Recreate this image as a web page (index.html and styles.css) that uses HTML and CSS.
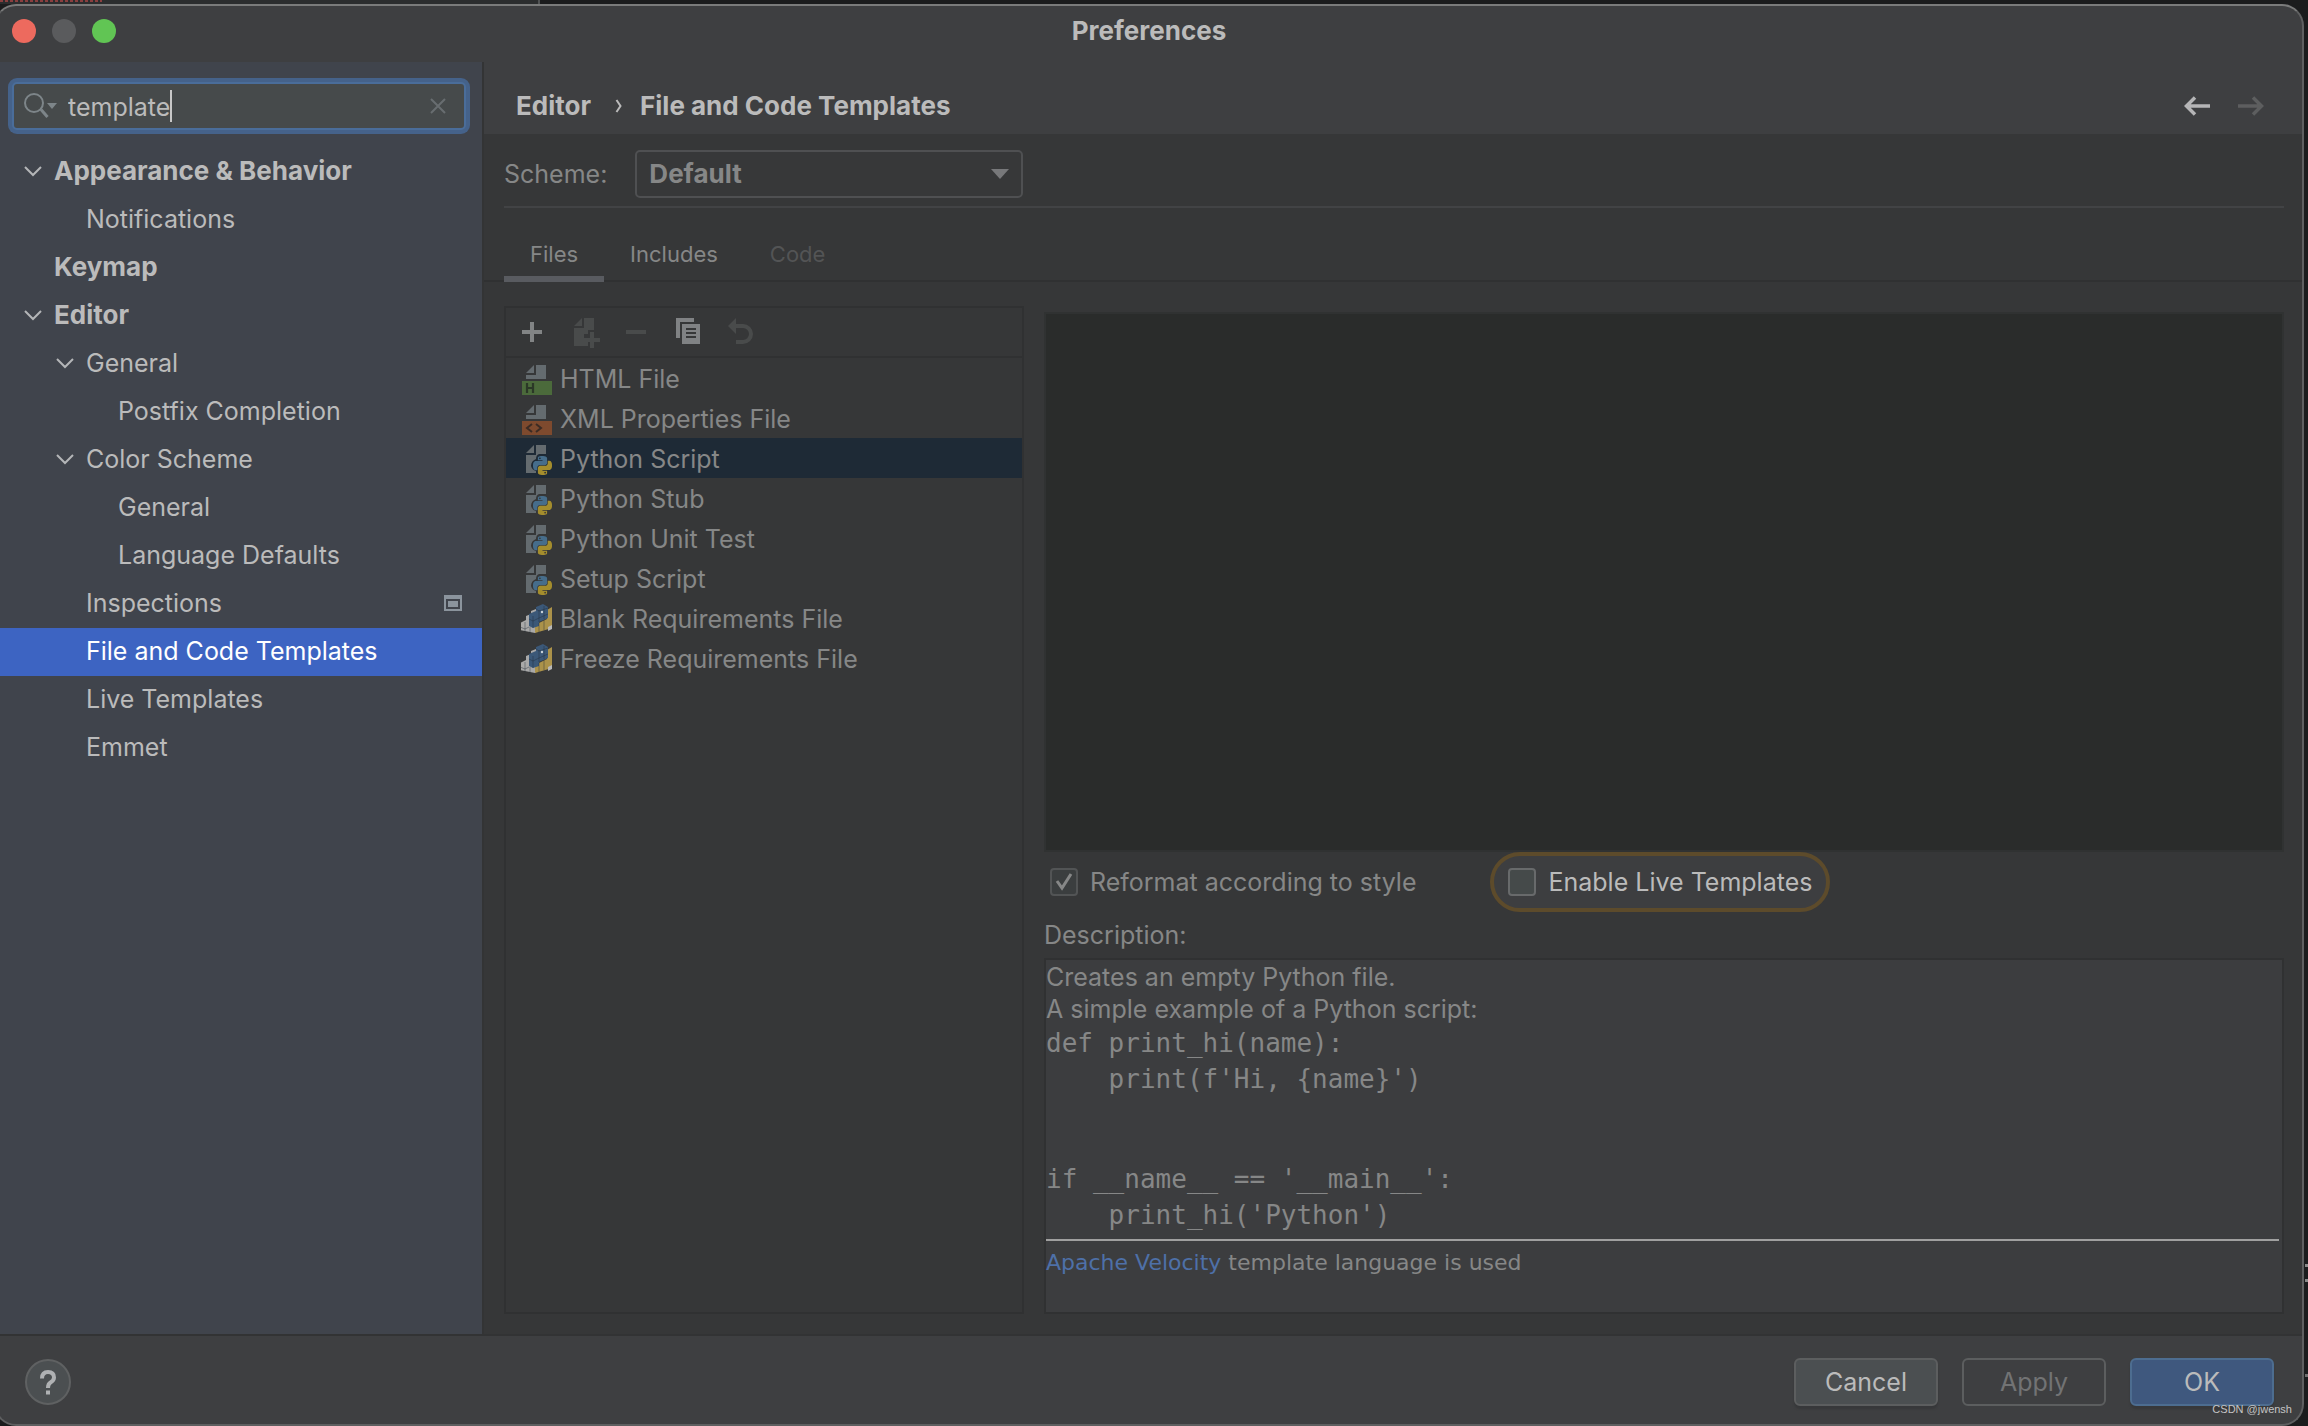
FILE: index.html
```html
<!DOCTYPE html>
<html lang="en">
<head>
<meta charset="utf-8">
<title>Preferences</title>
<link rel="stylesheet" href="styles.css">
</head>
<body>
<svg class="sprite" aria-hidden="true">
  <symbol id="chevron" viewBox="0 0 20 20"><path d="M2 6l8 8 8-8" fill="none" stroke="#b4b6b8" stroke-width="2"/></symbol>
  <symbol id="snake" viewBox="0 0 24 24">
    <path id="snake-half" fill="#466d8b" d="M14.25.18l.9.2.73.26.59.3.45.32.34.34.25.34.16.33.1.3.04.26.02.2-.01.13V8.500l-.05.63-.13.55-.21.46-.26.38-.3.31-.33.25-.35.19-.35.14-.33.1-.3.07-.26.04-.21.02H8.770l-.69.05-.59.14-.5.22-.41.27-.33.32-.27.35-.2.36-.15.37-.1.35-.07.32-.04.27-.02.21v3.060H3.170l-.21-.03-.28-.07-.32-.12-.35-.18-.36-.26-.36-.36-.35-.46-.32-.59-.28-.73-.21-.88-.14-1.050-.05-1.230.06-1.220.16-1.040.24-.87.32-.71.36-.57.4-.44.42-.33.42-.24.4-.16.36-.1.32-.05.24-.01h.16l.06.01h8.160v-.83H6.180l-.01-2.750-.02-.37.05-.34.11-.31.17-.28.25-.26.31-.23.38-.2.44-.18.51-.15.58-.12.64-.1.71-.06.77-.04.84-.02 1.270.05zm-6.300 1.980l-.23.33-.08.41.08.41.23.34.33.22.41.09.41-.09.33-.22.23-.34.08-.41-.08-.41-.23-.33-.33-.22-.41-.09-.41.09z"/>
    <path fill="#a48d2d" transform="rotate(180 12 12)" d="M14.25.18l.9.2.73.26.59.3.45.32.34.34.25.34.16.33.1.3.04.26.02.2-.01.13V8.500l-.05.63-.13.55-.21.46-.26.38-.3.31-.33.25-.35.19-.35.14-.33.1-.3.07-.26.04-.21.02H8.770l-.69.05-.59.14-.5.22-.41.27-.33.32-.27.35-.2.36-.15.37-.1.35-.07.32-.04.27-.02.21v3.060H3.170l-.21-.03-.28-.07-.32-.12-.35-.18-.36-.26-.36-.36-.35-.46-.32-.59-.28-.73-.21-.88-.14-1.050-.05-1.230.06-1.220.16-1.040.24-.87.32-.71.36-.57.4-.44.42-.33.42-.24.4-.16.36-.1.32-.05.24-.01h.16l.06.01h8.160v-.83H6.180l-.01-2.750-.02-.37.05-.34.11-.31.17-.28.25-.26.31-.23.38-.2.44-.18.51-.15.58-.12.64-.1.71-.06.77-.04.84-.02 1.270.05zm-6.300 1.980l-.23.33-.08.41.08.41.23.34.33.22.41.09.41-.09.33-.22.23-.34.08-.41-.08-.41-.23-.33-.33-.22-.41-.09-.41.09z"/>
  </symbol>
  <symbol id="file-html" viewBox="0 0 32 32">
    <path d="M5 10L13 2V10ZM15 2H25V16H5V12H15Z" fill="#646b6f"/>
    <path d="M1 18H31V32H1Z" fill="#4b6a3b"/>
    <path d="M6 20V30M12 20V30M6 25H12" stroke="#2b3827" stroke-width="2.200" fill="none"/>
  </symbol>
  <symbol id="file-xml" viewBox="0 0 32 32">
    <path d="M5 10L13 2V10ZM15 2H25V16H5V12H15Z" fill="#646b6f"/>
    <path d="M1 18H31V32H1Z" fill="#7e4a2e"/>
    <path d="M11 21L6 25 11 29M15 21L20 25 15 29" stroke="#3b2b24" stroke-width="2" fill="none"/>
  </symbol>
  <symbol id="file-python" viewBox="0 0 32 32">
    <path d="M5 10L13 2V10ZM15 2H25V11H18Q15 12 15 16 10 18 10 23 11 27 15 28V30H5V12H15Z" fill="#646b6f"/>
    <use href="#snake" x="12" y="13" width="19" height="19"/>
  </symbol>
  <symbol id="file-pip" viewBox="0 0 32 32">
    <path d="M-1 20L5 17V13L10 11V8L15 6V24L18 27 14 30 -1 27Z" fill="#a9a9a9"/>
    <path d="M18 20L26 16V7L31 4V25L14 30V22Z" fill="#ab924a"/>
    <path d="M27 24L31 22V26L27 28Z" fill="#b9b9b9"/>
    <path d="M8 11L15 8V4L22 1 27 4V15L18 19V23L12 25 8 23Z" fill="#3b5878"/>
    <path d="M8 16L12 18 18 15 27 11M12 13V25M18 7V19M15 6L18 8 27 5M23 3V16M-1 24L4 26 8 24M4 19V29M9 24V30M18 20V29M23 17V27" fill="none" stroke="#222c38" stroke-width=".6" opacity=".7"/>
    <circle cx="21" cy="9" r="1.200" fill="#c9d2da"/>
  </symbol>
</svg>

<div class="window">
  <header class="titlebar">
    <div class="lights">
      <button class="light light-close" aria-label="Close"></button>
      <button class="light light-min" aria-label="Minimize"></button>
      <button class="light light-zoom" aria-label="Zoom"></button>
    </div>
    <h1 class="title">Preferences</h1>
  </header>

  <div class="body">
    <aside class="sidebar">
      <div class="search">
        <svg class="search-icon" viewBox="0 0 34 28" aria-hidden="true"><circle cx="10" cy="11" r="9" fill="none" stroke="#7d8589" stroke-width="2"/><path d="M17 17.500L23.500 25" stroke="#7d8589" stroke-width="3"/><path d="M23 11h10l-5 6z" fill="#7d8589"/></svg>
        <div class="query-wrap"><input class="query" type="text" value="template" aria-label="Search settings"><span class="caret"></span></div>
        <button class="clear" aria-label="Clear"><svg viewBox="0 0 16 16"><path d="M1 1l14 14M15 1L1 15" stroke="#686d70" stroke-width="2"/></svg></button>
      </div>
      <ul class="tree">
        <li><a href="#" class="node group"><svg class="chev"><use href="#chevron"/></svg>Appearance &amp; Behavior</a></li>
        <li><a href="#" class="node level2">Notifications</a></li>
        <li><a href="#" class="node level1 group">Keymap</a></li>
        <li><a href="#" class="node group"><svg class="chev"><use href="#chevron"/></svg>Editor</a></li>
        <li><a href="#" class="node nested"><svg class="chev"><use href="#chevron"/></svg>General</a></li>
        <li><a href="#" class="node level3">Postfix Completion</a></li>
        <li><a href="#" class="node nested"><svg class="chev"><use href="#chevron"/></svg>Color Scheme</a></li>
        <li><a href="#" class="node level3">General</a></li>
        <li><a href="#" class="node level3">Language Defaults</a></li>
        <li><a href="#" class="node level2">Inspections<svg class="project-icon" viewBox="0 0 18 16"><path d="M0 0H18V16H0ZM2 4V14H16V4Z" fill="#8b949d" fill-rule="evenodd"/><path d="M4 6H14V12H4Z" fill="#8b949d"/></svg></a></li>
        <li><a href="#" class="node level2 current">File and Code Templates</a></li>
        <li><a href="#" class="node level2">Live Templates</a></li>
        <li><a href="#" class="node level2">Emmet</a></li>
      </ul>
    </aside>

    <main class="content">
      <div class="crumbs">
        <span>Editor</span>
        <svg class="crumb-sep" viewBox="0 0 8 14"><path d="M1.500 1l4 6-4 6" fill="none" stroke="#bbb" stroke-width="2"/></svg>
        <span>File and Code Templates</span>
        <div class="history">
          <button class="arrow" aria-label="Back"><svg viewBox="0 0 26 20"><path d="M26 10H3M11 1.500L2.500 10 11 18.500" fill="none" stroke="#b5b5b6" stroke-width="3.500"/></svg></button>
          <button class="arrow" aria-label="Forward" disabled><svg viewBox="0 0 26 20"><path d="M0 10H23M15 1.500L23.500 10 15 18.500" fill="none" stroke="#5d5e5f" stroke-width="3.500"/></svg></button>
        </div>
      </div>

      <div class="scheme">
        <label for="scheme">Scheme:</label>
        <div class="select-wrap">
          <select id="scheme" class="select"><option>Default</option><option>Project</option></select>
          <svg class="select-arrow" viewBox="0 0 18 10"><path d="M0 0H18L9 10Z" fill="#77787a"/></svg>
        </div>
      </div>

      <div class="tabs" role="tablist">
        <button class="tab tab-active" role="tab" aria-selected="true">Files</button>
        <button class="tab" role="tab">Includes</button>
        <button class="tab" role="tab" disabled>Code</button>
      </div>

      <div class="panes">
        <section class="templates">
          <div class="toolbar">
            <button class="tool" aria-label="Create template"><svg viewBox="0 0 32 32"><path d="M6 16H26M16 6V26" stroke="#828485" stroke-width="4"/></svg></button>
            <button class="tool" aria-label="Create child template" disabled><svg viewBox="0 0 32 32"><path d="M6 10L14 2V10ZM16 2H26V14H20V18H16V26H20V30H6V12H16Z" fill="#494b4b"/><path d="M24 16V32M16 24H32" stroke="#494b4b" stroke-width="4"/></svg></button>
            <button class="tool" aria-label="Remove template" disabled><svg viewBox="0 0 32 32"><path d="M6 16H26" stroke="#494b4b" stroke-width="4"/></svg></button>
            <button class="tool" aria-label="Copy template"><svg viewBox="0 0 32 32"><path d="M4 2H22V6H8V22H4Z" fill="#808284"/><path d="M10 8H28V28H10ZM14 12V14H24V12ZM14 16V18H24V16ZM14 20V22H24V20Z" fill="#808284" fill-rule="evenodd"/></svg></button>
            <button class="tool" aria-label="Reset to default" disabled><svg viewBox="0 0 32 32"><path d="M12 2V18L4 10Z" fill="#494b4b"/><path d="M10 10H19A8 8 0 0 1 19 26H12" fill="none" stroke="#494b4b" stroke-width="4"/></svg></button>
          </div>
          <ul class="files">
            <li><button class="file"><svg><use href="#file-html"/></svg>HTML File</button></li>
            <li><button class="file"><svg><use href="#file-xml"/></svg>XML Properties File</button></li>
            <li><button class="file file-selected"><svg><use href="#file-python"/></svg>Python Script</button></li>
            <li><button class="file"><svg><use href="#file-python"/></svg>Python Stub</button></li>
            <li><button class="file"><svg><use href="#file-python"/></svg>Python Unit Test</button></li>
            <li><button class="file"><svg><use href="#file-python"/></svg>Setup Script</button></li>
            <li><button class="file"><svg><use href="#file-pip"/></svg>Blank Requirements File</button></li>
            <li><button class="file"><svg><use href="#file-pip"/></svg>Freeze Requirements File</button></li>
          </ul>
        </section>

        <section class="detail">
          <textarea class="source" aria-label="Template source" spellcheck="false"></textarea>
          <div class="options">
            <label class="check check-dim"><input type="checkbox" checked>Reformat according to style</label>
            <label class="check check-hit"><input type="checkbox">Enable Live Templates</label>
          </div>
          <h2 class="caption">Description:</h2>
          <div class="description">
            <p>Creates an empty Python file.</p>
            <p>A simple example of a Python script:</p>
            <pre>def print_hi(name):
    print(f'Hi, {name}')</pre>
            <pre>if __name__ == '__main__':
    print_hi('Python')</pre>
            <hr>
            <p class="note"><a href="#">Apache Velocity</a> template language is used</p>
          </div>
        </section>
      </div>
    </main>
  </div>

  <footer class="footer">
    <button class="help" aria-label="Help"><svg viewBox="0 0 20 26"><path d="M4 9.500Q4 3 10 3T16 8.500Q16 11.500 12.500 13.500 10 15 10 19" fill="none" stroke="#afb1b3" stroke-width="4"/><path d="M8 21.500H12V25.500H8Z" fill="#afb1b3"/></svg></button>
    <div class="actions">
      <button class="btn">Cancel</button>
      <button class="btn btn-off" disabled>Apply</button>
      <button class="btn btn-ok">OK</button>
    </div>
  </footer>
</div>
<span class="credit">CSDN @jwensh</span>
</body>
</html>
```
FILE: styles.css
```css
* { box-sizing: border-box; }

body {
  margin: 0;
  height: 100vh;
  display: flex;
  padding: 4px 4px 0 0;
  overflow: hidden;
  background:
    repeating-linear-gradient(90deg, #8a3f3f 0 3px, #2b2d2e 3px 5px) 0 0 / 102px 2px no-repeat,
    linear-gradient(#505253, #505253) 538px 0 / 2px 4px no-repeat,
    linear-gradient(#2b2d2e, #2b2d2e) 0 0 / 538px 4px no-repeat,
    linear-gradient(#8a8a8a, #8a8a8a) right bottom 159px / 3px 3px no-repeat,
    linear-gradient(#8a8a8a, #8a8a8a) right bottom 144px / 3px 3px no-repeat,
    linear-gradient(#6f6f6f, #6f6f6f) right bottom 49px / 3px 3px no-repeat,
    #1b1c1d;
  font: 25px/32px Inter, "Noto Sans", sans-serif;
  color: #bbbbbb;
}

button, input, select, textarea { font: inherit; color: inherit; }
button { border: 0; padding: 0; background: none; display: block; text-align: left; }
ul { list-style: none; margin: 0; padding: 0; }
a { color: inherit; text-decoration: none; }
h1, h2, p, pre { margin: 0; font-size: inherit; }
svg { display: block; flex: none; }

.sprite { position: absolute; width: 0; height: 0; }

.window {
  flex: 1;
  min-width: 0;
  display: flex;
  flex-direction: column;
  margin-left: -6px;
  padding-left: 4px;
  border: 2px solid #5e5f60;
  border-top-color: #7a7b7b;
  border-radius: 22px;
  overflow: hidden;
  background: #3e3f41;
}

.titlebar {
  height: 56px;
  flex: none;
  display: grid;
  grid-template-columns: 1fr auto 1fr;
  align-items: center;
  padding: 0 16px 6px 12px;
}
.lights { display: flex; gap: 16px; }
.light { width: 24px; height: 24px; border-radius: 50%; }
.light-close { background: #ed6a5e; }
.light-min { background: #5a5b5d; }
.light-zoom { background: #61c554; }
.title { font-size: 26px; font-weight: 700; }

.body { flex: 1; min-height: 0; display: flex; }

.sidebar {
  width: 484px;
  flex: none;
  background: #40444c;
  border-right: 2px solid #333435;
}
.search {
  display: flex;
  align-items: center;
  height: 48px;
  margin: 20px 16px 18px 12px;
  padding: 0 18px 0 10px;
  border: 2px solid #4a6d9a;
  border-radius: 5px;
  box-shadow: 0 0 0 4px #45628a;
  background: #464a4b;
}
.search-icon { width: 34px; height: 28px; }
.query-wrap { flex: 1; display: flex; align-items: center; padding-left: 10px; }
.query {
  field-sizing: content;
  height: 36px;
  border: 0;
  padding: 2px 0 0;
  outline: 0;
  background: none;
}
.caret { width: 2px; height: 32px; background: #c8c8c8; }
.clear svg { width: 16px; height: 16px; }

.node {
  display: flex;
  align-items: center;
  height: 48px;
  padding: 0 0 2px 23px;
}
.chev { width: 20px; height: 20px; margin-right: 11px; }
.group { font-size: 26px; font-weight: 700; }
.level1 { padding-left: 54px; }
.nested { padding-left: 55px; }
.level2 { padding-left: 86px; }
.level3 { padding-left: 118px; }
.current { background: #3d64c2; color: #fff; }
.project-icon { width: 18px; height: 16px; margin: 0 20px 0 auto; }

.content {
  flex: 1;
  min-width: 0;
  display: flex;
  flex-direction: column;
  background: #363738;
  color: #868787;
}
.crumbs {
  height: 72px;
  flex: none;
  display: flex;
  align-items: center;
  padding: 16px 38px 0 32px;
  background: #3e3f41;
  color: #bbbbbb;
  font-size: 26px;
  font-weight: 700;
}
.crumb-sep { width: 8px; height: 14px; margin: 0 17px 0 24px; }
.history { display: flex; gap: 28px; margin-left: auto; }
.arrow svg { width: 26px; height: 20px; }

.scheme {
  height: 74px;
  flex: none;
  display: flex;
  align-items: center;
  gap: 28px;
  margin: 0 18px 0 20px;
  padding-top: 8px;
  border-bottom: 2px solid #424345;
}
.select-wrap { position: relative; width: 388px; }
.select {
  appearance: none;
  width: 100%;
  height: 48px;
  padding: 0 12px;
  border: 2px solid #4f5052;
  border-radius: 5px;
  background: #373839;
  font-size: 26px;
  font-weight: 700;
}
.select-arrow { position: absolute; right: 14px; top: 19px; width: 18px; height: 10px; }

.tabs {
  height: 74px;
  flex: none;
  display: flex;
  padding: 18px 0 0 20px;
  border-bottom: 2px solid #303132;
  font-size: 22px;
}
.tab { height: 56px; padding: 6px 26px 0; border-bottom: 6px solid transparent; }
.tab-active { border-color: #595b60; }
.tab:disabled { color: #535455; }

.panes { flex: 1; min-height: 0; display: flex; gap: 20px; padding: 24px 18px 20px 20px; }

.templates { width: 520px; flex: none; border: 2px solid #303132; }
.toolbar {
  height: 50px;
  display: flex;
  align-items: center;
  gap: 20px;
  padding-left: 10px;
  border-bottom: 2px solid #303132;
}
.tool svg { width: 32px; height: 32px; }
.file {
  display: flex;
  align-items: center;
  gap: 7px;
  width: 100%;
  height: 40px;
  padding: 2px 0 0 15px;
}
.file svg { width: 32px; height: 32px; }
.file-selected { background: #1e2a36; }

.detail { flex: 1; min-width: 0; display: flex; flex-direction: column; padding-top: 6px; }
.source {
  flex: 1;
  display: block;
  width: 100%;
  resize: none;
  border: 2px solid #303232;
  outline: 0;
  background: #2a2c2b;
}
.options { display: flex; align-items: center; gap: 74px; height: 62px; padding: 0 0 2px 6px; }
.check { display: flex; align-items: center; gap: 12px; }
.check input {
  appearance: none;
  width: 28px;
  height: 28px;
  margin: 0;
  border: 2px solid #525455;
  border-radius: 4px;
  background: #3b3e3f;
}
.check input:checked {
  background: #3b3e3f url("data:image/svg+xml,%3Csvg xmlns='http://www.w3.org/2000/svg' viewBox='0 0 24 24'%3E%3Cpath d='M5 11l5 7L19 4' fill='none' stroke='%23868787' stroke-width='3'/%3E%3C/svg%3E") center / contain no-repeat;
}
.check-hit {
  height: 60px;
  padding: 0 14px;
  border: 4px solid #5d4b2b;
  border-radius: 30px;
  background: #3d3e40;
  color: #bbbbbb;
}
.check-hit input { border-color: #686a6b; background: #454a4a; }
.caption { padding: 5px 0 7px; font-weight: 400; }

.description {
  height: 356px;
  padding-top: 1px;
  border: 2px solid #303132;
  background: #3c3d3f;
}
.description pre { font: 26px/36px "DejaVu Sans Mono", monospace; margin-bottom: 64px; }
.description pre + pre { margin-bottom: 0; }
.description hr { height: 2px; margin: 6px 3px 6px 0; border: 0; background: #a0a0a0; }
.description .note { font: 22px/32px "DejaVu Sans", sans-serif; }
.note a { color: #4e70a8; }

.footer {
  height: 90px;
  flex: none;
  display: flex;
  align-items: center;
  justify-content: space-between;
  padding: 4px 28px 0 25px;
  border-top: 2px solid #323334;
}
.help {
  display: grid;
  place-items: center;
  width: 46px;
  height: 46px;
  border: 2px solid #5f6162;
  border-radius: 50%;
  background: #4b4f51;
}
.help svg { width: 20px; height: 26px; }
.actions { display: flex; gap: 24px; }
.btn {
  width: 144px;
  height: 48px;
  border: 2px solid #5c5e5f;
  border-radius: 6px;
  background: #4b4f51;
  text-align: center;
  box-shadow: 0 3px 2px #37383a;
}
.btn-off { background: none; color: #727374; box-shadow: none; }
.btn-ok { border-color: #4d6d90; background: #3f587e; }

.credit {
  position: absolute;
  right: 16px;
  bottom: 9px;
  font: 11px/16px "Liberation Sans", sans-serif;
  color: #c4c4c4;
}
```
